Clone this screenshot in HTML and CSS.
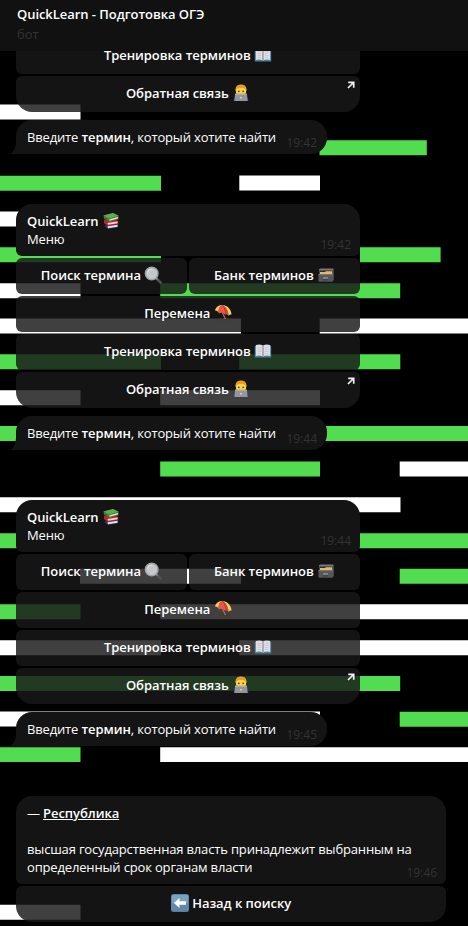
FILE: index.html
```html
<!DOCTYPE html>
<html lang="ru">
<head>
<meta charset="utf-8">
<title>QuickLearn</title>
<link rel="stylesheet" href="styles.css">
</head>
<body>
<svg class="defs" width="0" height="0" aria-hidden="true">
  <symbol id="books" viewBox="0 0 18 18">
    <path d="M3 12.500 13 11l3.500 1.500-.5 3L6.500 17 3 15z" fill="#35305c"/>
    <path d="M5.500 14.200 15.500 12.700v2L6 16.300z" fill="#e4e1e4"/>
    <path d="M2 8 12 7l4.500 2-.5 3-9.500 1.700L2 11.300z" fill="#c8202b"/>
    <path d="M5.500 11 15.500 9.600v1.600L6 12.700z" fill="#f0dfe0"/>
    <path d="M1.500 3.500 11 1l5.500 2.800v3.400L7 9.700 2 6.800z" fill="#397c34"/>
    <path d="M1.500 3.500 11 1l5.500 2.800L7 6.400z" fill="#62a94f"/>
    <path d="M7.500 7.200 16 5v1.500L7.300 8.800z" fill="#dfe8d8"/>
  </symbol>
  <symbol id="lens" viewBox="0 0 18 18">
    <path d="M12 12 16.600 16.600" stroke="#4d535a" stroke-width="2.600" stroke-linecap="round"/>
    <path d="M11 11 13.500 13.500" stroke="#8e959b" stroke-width="1.500"/>
    <circle cx="7.700" cy="7.500" r="6.300" fill="#c6c7c9" stroke="#9da0a4" stroke-width="1.500"/>
    <path d="M3.700 7a4 4 0 0 1 4-4" stroke="#e2e3e4" fill="none"/>
  </symbol>
  <symbol id="files" viewBox="0 0 18 18">
    <path d="M2 3.500 3.500 2H16l1 1.500V14l-1.500 1.500H2z" fill="#45484b"/>
    <path d="M2 3.200h14v1H2z" fill="#85888a"/>
    <path d="M3 5h12v3H3z" fill="#312d28"/>
    <path d="M3 6h5l1-.8h6.200v3.200H3z" fill="#eab66c"/>
    <path d="M1.500 8.200h14.500v7.300H1.500z" fill="#55585a"/>
    <path d="M1.500 8.200h14.500v1H1.500z" fill="#797c7e"/>
    <path d="M6 11.300h5v1.300H6z" fill="#999c9e"/>
    <path d="M6 13.500h5v.8H6z" fill="#303234"/>
  </symbol>
  <symbol id="umbrella" viewBox="0 0 18 18">
    <ellipse cx="10.500" cy="15.300" rx="5" ry="1.500" fill="#49382f"/>
    <path d="M8.500 9 11.500 15" stroke="#9c7964" stroke-width="1.200"/>
    <path d="M1 6.500C2 2.500 5 1 8.500 1 4.500 3 4.300 6.500 5 9.500 4 7.300 3 6.500 1 6.500z" fill="#f4c657"/>
    <path d="M8.500 1C4.500 3 4.300 6.500 5 9.500c2.500-1.300 4.500-.8 6 1.300C11.500 7 10.500 3.500 8.500 1z" fill="#ee5549"/>
    <path d="M8.500 1c2 2.500 3 6 2.500 9.800 1-.6 2.300-.3 3.500 1.200C14.500 8 12.500 3 8.500 1z" fill="#d94036"/>
    <path d="M8.500 1c4 2 6 7 6 11 .5-1.200 1.500-1.700 3-1.500C17.300 5.500 13.500 1.300 8.500 1z" fill="#f7cd63"/>
  </symbol>
  <symbol id="book" viewBox="0 0 18 18">
    <path d="M.8 4h16.400v11.500H.8z" fill="#487f9c"/>
    <path d="M1.800 3Q6 1.800 9 3.500 12 1.800 16.200 3v11Q12 13 9 14.500 6 13 1.800 14z" fill="#dedee5"/>
    <path d="M9 3.500v11" stroke="#8c8c98" stroke-width="1.200"/>
    <path d="M3.500 5.500h3.700M3.500 7.500h3.700M3.500 9.500h3.700M3.500 11.500h3.700M10.800 5.500h3.700M10.800 7.500h3.700M10.800 9.500h3.700M10.800 11.500h3.700" stroke="#c3c3cd" stroke-width=".7"/>
  </symbol>
  <symbol id="coder" viewBox="0 0 18 18">
    <path d="M1.500 17 3 12.500h12l1.500 4.500z" fill="#3543c0"/>
    <path d="M3.500 7C3 2.500 5.500.5 9 .5s6 2 5.500 6.500z" fill="#e9a019"/>
    <path d="M4 5.500Q9 2.500 14 5.500V9q-1 3-5 3T4 9z" fill="#ffcf45"/>
    <path d="M5 5.500Q9 3.500 13 5.500" stroke="#f7dc79" fill="none"/>
    <circle cx="6.800" cy="7.300" r=".9" fill="#604114"/>
    <circle cx="11.200" cy="7.300" r=".9" fill="#604114"/>
    <path d="M3 9.800h12l.5 7.200h-13z" fill="#949699"/>
    <path d="M3 9.800h12v.8H3z" fill="#b6b7b9"/>
    <circle cx="9" cy="13.700" r=".8" fill="#f4f4f4"/>
  </symbol>
  <symbol id="back" viewBox="0 0 18 18">
    <rect width="18" height="18" rx="2.500" fill="#587d9f"/>
    <rect x=".7" y=".7" width="16.600" height="15.500" rx="2" fill="#7ba0c0"/>
    <path d="M1 9h16v5.500q0 1.700-2 1.700H3q-2 0-2-1.700z" fill="#6288aa"/>
    <path d="M2.800 9 8.500 4v3.200H15v3.600H8.500V14z" fill="#fff"/>
  </symbol>
  <symbol id="out" viewBox="0 0 8 8">
    <path d="M1.200 1.300H6.700v5.500M6.500 1.500 1 7" fill="none" stroke="#f0f0f0" stroke-width="1.700"/>
  </symbol>
  <symbol id="tail" viewBox="0 0 8 16">
    <path d="M6 0h2v16H0Q6 12.500 6 4z" fill="#141414"/>
  </symbol>
</svg>

<div class="app">
  <svg class="wallpaper" viewBox="0 0 468 926" aria-hidden="true">
    <g fill="#fff">
      <path d="M0 104.500h80.500v15H0z"/>
      <path d="M239.300 175.500H320v15h-80.700z"/>
      <path d="M0 211.500h80.500v15H0z"/>
      <path d="M0 283.200h80.500v15H0z"/>
      <path d="M0 318.600h241v15H0zM319.700 318.600H468v15H319.700z"/>
      <path d="M0 390.200h80.500v15H0zM160.200 390.200H320v15H160.200z"/>
      <path d="M399.700 461.500H468v15h-68.300z"/>
      <path d="M0 497.300h400.500v15H0z"/>
      <path d="M80 568.800h161v15H80z"/>
      <path d="M160.200 604.300H468v15H160.200z"/>
      <path d="M0 640.200h161v15H0zM239.300 640.200H468v15H239.300z"/>
      <path d="M0 711.500h320v15H0z"/>
      <path d="M160.200 747.200H468V762H160.200z"/>
      <path d="M0 904.700h80.500v15H0z"/>
    </g>
    <g fill="#52dc50">
      <path d="M319.500 140.200h107.300v15H319.500z"/>
      <path d="M0 175.700h161v15H0z"/>
      <path d="M0 247.300h161v15H0zM360 247.300h80.600v15H360z"/>
      <path d="M160.200 283.200h240v15h-240z"/>
      <path d="M0 354.300h161v15H0zM239.300 354.300h161v15h-161z"/>
      <path d="M0 426h80.500v15H0zM239.300 426H468v15H239.300z"/>
      <path d="M160.200 461.500H320v15H160.200z"/>
      <path d="M0 533.200h80.500v15H0zM319.700 533.200H468v15H319.700z"/>
      <path d="M399.700 568.800H468v15h-68.300z"/>
      <path d="M0 604.300h80.500v15H0z"/>
      <path d="M0 676h400.200v15H0z"/>
      <path d="M399.700 711.800H468v15h-68.300z"/>
      <path d="M0 747.200h80.500V762H0z"/>
    </g>
  </svg>

  <header class="topbar">
    <div class="title">QuickLearn - Подготовка ОГЭ</div>
    <div class="status">бот</div>
  </header>

  <main class="chat">
    <section class="message menu">
      <div class="keyboard">
        <div class="key">Тренировка терминов <svg class="emoji"><use href="#book"/></svg></div>
        <div class="key">Обратная связь <svg class="emoji"><use href="#coder"/></svg><svg class="out"><use href="#out"/></svg></div>
      </div>
    </section>

    <section class="message prompt">
      <div class="bubble">Введите <b>термин</b>, который хотите найти<time>19:42</time><svg class="tail"><use href="#tail"/></svg></div>
    </section>

    <section class="message menu after-reply">
      <div class="bubble"><b>QuickLearn <svg class="emoji"><use href="#books"/></svg></b><br>Меню<time>19:42</time></div>
      <div class="keyboard">
        <div class="row">
          <div class="key">Поиск термина <svg class="emoji"><use href="#lens"/></svg></div>
          <div class="key">Банк терминов <svg class="emoji"><use href="#files"/></svg></div>
        </div>
        <div class="key">Перемена <svg class="emoji"><use href="#umbrella"/></svg></div>
        <div class="key">Тренировка терминов <svg class="emoji"><use href="#book"/></svg></div>
        <div class="key">Обратная связь <svg class="emoji"><use href="#coder"/></svg><svg class="out"><use href="#out"/></svg></div>
      </div>
    </section>

    <section class="message prompt">
      <div class="bubble">Введите <b>термин</b>, который хотите найти<time>19:44</time><svg class="tail"><use href="#tail"/></svg></div>
    </section>

    <section class="message menu after-reply">
      <div class="bubble"><b>QuickLearn <svg class="emoji"><use href="#books"/></svg></b><br>Меню<time>19:44</time></div>
      <div class="keyboard">
        <div class="row">
          <div class="key">Поиск термина <svg class="emoji"><use href="#lens"/></svg></div>
          <div class="key">Банк терминов <svg class="emoji"><use href="#files"/></svg></div>
        </div>
        <div class="key">Перемена <svg class="emoji"><use href="#umbrella"/></svg></div>
        <div class="key">Тренировка терминов <svg class="emoji"><use href="#book"/></svg></div>
        <div class="key">Обратная связь <svg class="emoji"><use href="#coder"/></svg><svg class="out"><use href="#out"/></svg></div>
      </div>
    </section>

    <section class="message prompt">
      <div class="bubble">Введите <b>термин</b>, который хотите найти<time>19:45</time><svg class="tail"><use href="#tail"/></svg></div>
    </section>

    <section class="message answer after-reply">
      <div class="bubble">— <b class="term">Республика</b><br><br>высшая государственная власть принадлежит выбранным на<br>определенный срок органам власти<time>19:46</time></div>
      <div class="keyboard">
        <div class="key"><svg class="emoji"><use href="#back"/></svg> Назад к поиску</div>
      </div>
    </section>
  </main>
</div>
</body>
</html>
```
FILE: styles.css
```css
* {
  box-sizing: border-box;
}

body {
  margin: 0;
  background: #000;
  color: #fff;
  font: 13px/18px "Open Sans", "Noto Sans", sans-serif;
}

b {
  font-weight: 600;
  letter-spacing: -0.06px;
}

.defs {
  position: absolute;
}

.app {
  position: relative;
  display: flex;
  flex-direction: column;
  height: 926px;
  overflow: hidden;
}

.wallpaper {
  position: absolute;
  inset: 0;
  width: 468px;
  height: 926px;
}

.topbar {
  position: relative;
  z-index: 2;
  flex: none;
  height: 51px;
  padding: 4px 17px;
  background: #111;
}

.title {
  font-weight: 600;
  line-height: 20px;
  letter-spacing: -0.05px;
}

.status {
  color: #333;
  line-height: 21px;
}

.chat {
  position: relative;
  z-index: 1;
  flex: 1;
  min-height: 0;
  display: flex;
  flex-direction: column;
  justify-content: flex-end;
  gap: 8px;
  padding: 0 16px 4px;
}

.message {
  flex: none;
  display: flex;
  flex-direction: column;
  gap: 2px;
}

.menu {
  width: 344px;
}

.prompt {
  width: 311px;
}

.answer {
  width: 430px;
}

.after-reply {
  margin-top: 42px;
}

.bubble {
  position: relative;
  padding: 8px 11px;
  border-radius: 16px 16px 6px 6px;
  background: #141414;
  letter-spacing: -0.16px;
}

.prompt .bubble {
  border-radius: 16px 16px 16px 0;
}

.bubble time {
  position: absolute;
  right: 9px;
  bottom: 3px;
  color: #333;
  font-size: 12px;
  line-height: 16px;
  letter-spacing: 0;
}

.prompt time {
  right: 10px;
}

.tail {
  position: absolute;
  left: -6px;
  bottom: 0;
  width: 8px;
  height: 16px;
}

.term {
  text-decoration: underline;
}

.keyboard {
  display: flex;
  flex-direction: column;
  gap: 2px;
}

.row {
  display: grid;
  grid-template-columns: 1fr 1fr;
  gap: 2px;
}

.key {
  position: relative;
  height: 36px;
  padding-top: 8px;
  border-radius: 6px;
  background: rgba(24, 24, 24, 0.827);
  font-weight: 600;
  letter-spacing: -0.05px;
  text-align: center;
  white-space: nowrap;
}

.keyboard > .key:last-child {
  border-radius: 6px 6px 16px 16px;
}

.emoji {
  width: 18px;
  height: 18px;
  margin: -4px 0;
  vertical-align: 0;
}

.out {
  position: absolute;
  top: 5px;
  right: 5px;
  width: 8px;
  height: 8px;
}
```
